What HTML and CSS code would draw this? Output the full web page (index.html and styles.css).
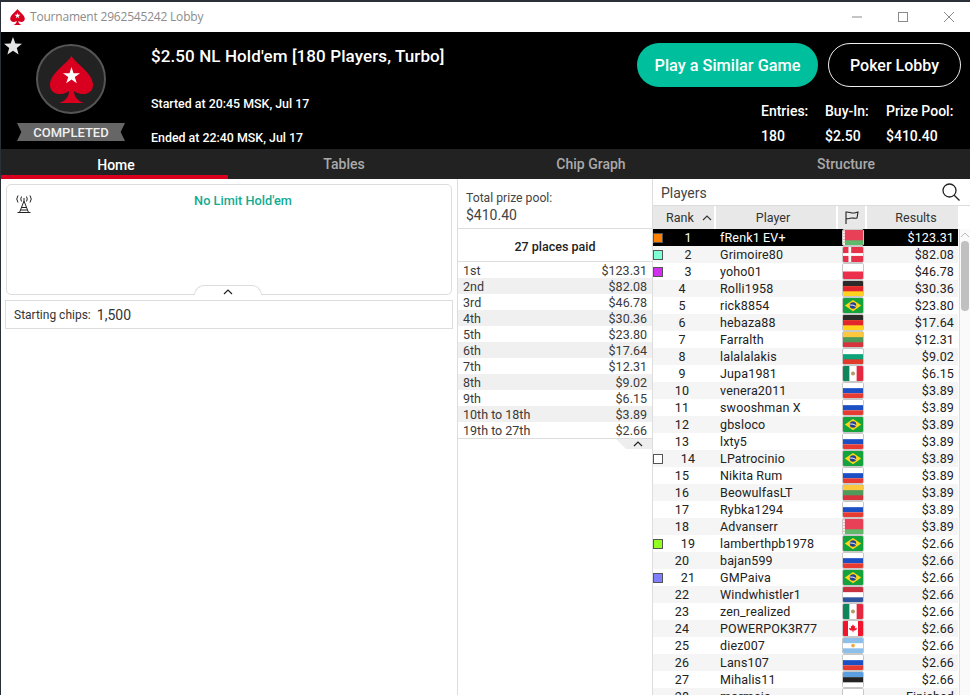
FILE: index.html
```html
<!DOCTYPE html>
<html lang="en">
<head>
<meta charset="utf-8">
<title>Tournament 2962545242 Lobby</title>
<link rel="stylesheet" href="styles.css">
</head>
<body>
<svg class="defs" width="0" height="0" aria-hidden="true">
  <defs>
    <symbol id="spade" viewBox="0 0 43 47"><path d="M21.5 0C17 8 0 17 0 29C0 38 11 41 19 35C19 41 15 45 9 47H34C28 45 24 41 24 35C32 41 43 38 43 29C43 17 26 8 21.500 0Z" fill="#d9001f"/><polygon points="21.5,11 23.52,17.22 30.06,17.22 24.77,21.06 26.79,27.28 21.5,23.44 16.21,27.28 18.23,21.06 12.94,17.22 19.48,17.22" fill="#fff"/></symbol>
    <symbol id="by" viewBox="0 0 22 16" preserveAspectRatio="none"><rect width="22" height="16" fill="#e84057"/><rect y="11" width="22" height="5" fill="#5fb96a"/><rect width="2" height="16" fill="#fff"/><path d="M.5 1h1M.5 4h1M.5 7h1M.5 10h1M.5 13h1" stroke="#e84057"/></symbol>
    <symbol id="dk" viewBox="0 0 22 16" preserveAspectRatio="none"><rect width="22" height="16" fill="#e8324a"/><rect x="6" width="3" height="16" fill="#fff"/><rect y="6.500" width="22" height="3" fill="#fff"/></symbol>
    <symbol id="pl" viewBox="0 0 22 16" preserveAspectRatio="none"><rect width="22" height="16" fill="#fff"/><rect y="8" width="22" height="8" fill="#ec2f4b"/></symbol>
    <symbol id="de" viewBox="0 0 22 16" preserveAspectRatio="none"><rect width="22" height="16" fill="#ffd21f"/><rect width="22" height="5.500" fill="#2a2a2a"/><rect y="5.500" width="22" height="5.500" fill="#e3262e"/></symbol>
    <symbol id="br" viewBox="0 0 22 16" preserveAspectRatio="none"><rect width="22" height="16" fill="#14a23c"/><path d="M11 2L20 8L11 14L2 8Z" fill="#ffd616"/><circle cx="11" cy="8" r="3.500" fill="#233f8f"/><path d="M7.800 7.500Q11 7 14.200 9" stroke="#fff" fill="none"/></symbol>
    <symbol id="lt" viewBox="0 0 22 16" preserveAspectRatio="none"><rect width="22" height="16" fill="#4d9a5a"/><rect width="22" height="5.500" fill="#fdc83d"/><rect y="11" width="22" height="5" fill="#d6333f"/></symbol>
    <symbol id="bg" viewBox="0 0 22 16" preserveAspectRatio="none"><rect width="22" height="16" fill="#0fa37a"/><rect width="22" height="5.500" fill="#fff"/><rect y="11" width="22" height="5" fill="#e23a2a"/></symbol>
    <symbol id="mx" viewBox="0 0 22 16" preserveAspectRatio="none"><rect width="22" height="16" fill="#fff"/><rect width="7" height="16" fill="#10855a"/><rect x="15" width="7" height="16" fill="#e4283f"/><circle cx="11" cy="8" r="2.200" fill="#b39a6a"/></symbol>
    <symbol id="ru" viewBox="0 0 22 16" preserveAspectRatio="none"><rect width="22" height="16" fill="#fff"/><rect y="5.500" width="22" height="5.500" fill="#1d4fc4"/><rect y="11" width="22" height="5" fill="#e63a32"/></symbol>
    <symbol id="nl" viewBox="0 0 22 16" preserveAspectRatio="none"><rect width="22" height="16" fill="#fff"/><rect width="22" height="5.500" fill="#c8313f"/><rect y="11" width="22" height="5" fill="#2f55a0"/></symbol>
    <symbol id="ca" viewBox="0 0 22 16" preserveAspectRatio="none"><rect width="22" height="16" fill="#fff"/><rect width="5.500" height="16" fill="#f0142c"/><rect x="16.500" width="5.500" height="16" fill="#f0142c"/><path d="M11 3.500l1.200 2 1.300-.5-.4 3 1.700-.8.600 1.200-2 1.700h-1.900v1.900h-1v-1.900H8.600l-2-1.700.6-1.200 1.700.8-.4-3 1.300.5z" fill="#f0142c"/></symbol>
    <symbol id="ar" viewBox="0 0 22 16" preserveAspectRatio="none"><rect width="22" height="16" fill="#fff"/><rect width="22" height="5.500" fill="#8cc0ea"/><rect y="11" width="22" height="5" fill="#8cc0ea"/><circle cx="11" cy="8" r="2" fill="#f3a93c"/></symbol>
    <symbol id="ee" viewBox="0 0 22 16" preserveAspectRatio="none"><rect width="22" height="16" fill="#fff"/><rect width="22" height="5.500" fill="#5b9fe0"/><rect y="5.500" width="22" height="5.500" fill="#222"/></symbol>
    <symbol id="blank" viewBox="0 0 22 16" preserveAspectRatio="none"><rect width="22" height="16" fill="#fff"/></symbol>
  </defs>
</svg>
<div class="window">
  <div class="titlebar">
    <svg class="title-logo"><use href="#spade"/></svg>
    <span class="title-text">Tournament 2962545242 Lobby</span>
    <div class="controls">
      <svg class="ctrl" viewBox="0 0 12 12"><path d="M1 6H11" /></svg>
      <svg class="ctrl" viewBox="0 0 12 12"><rect x="1.500" y="1.500" width="9" height="9"/></svg>
      <svg class="ctrl" viewBox="0 0 12 12"><path d="M1 1L11 11M11 1L1 11"/></svg>
    </div>
  </div>

  <header class="header">
    <svg class="fav" viewBox="0 0 18 18"><path d="M9 0l2.400 6.400 6.600.3-5.200 4.200 1.800 6.600L9 13.700l-5.600 3.800 1.800-6.600L0 6.700l6.600-.3z"/></svg>
    <div class="brand">
      <div class="badge"><svg class="badge-spade"><use href="#spade"/></svg></div>
      <div class="ribbon">COMPLETED</div>
    </div>
    <div class="details">
      <h1 class="game">$2.50 NL Hold'em [180 Players, Turbo]</h1>
      <p class="time started">Started at 20:45 MSK, Jul 17</p>
      <p class="time ended">Ended at 22:40 MSK, Jul 17</p>
    </div>
    <div class="actions">
      <div class="buttons">
        <button class="btn btn-primary">Play a Similar Game</button>
        <button class="btn btn-outline">Poker Lobby</button>
      </div>
      <div class="stats">
        <span>Entries:</span><span>Buy-In:</span><span>Prize Pool:</span>
        <span class="stat-val">180</span><span class="stat-val">$2.50</span><span class="stat-val">$410.40</span>
      </div>
    </div>
  </header>

  <nav class="tabs">
    <div class="tab active">Home</div>
    <div class="tab">Tables</div>
    <div class="tab">Chip Graph</div>
    <div class="tab">Structure</div>
  </nav>

  <main class="main">
    <section class="home">
      <div class="info">
        <div class="info-top">
          <svg class="antenna" viewBox="0 0 18 18"><path d="M9 6L4.500 17.500M9 6L13.500 17.500M6.800 12.500H11.200M5.600 15H12.400M2.500 17.500H15.500M9 3V6M6.500 1.500Q5 4 6.500 6.500M11.500 1.500Q13 4 11.500 6.500M3 .5Q.5 4 3 7.500M15 .5Q17.500 4 15 7.500"/></svg>
          <div class="variant">No Limit Hold'em</div>
        </div>
        <div class="collapse"><svg class="chev" viewBox="0 0 10 6"><path d="M1 5L5 1L9 5"/></svg></div>
      </div>
      <div class="chips"><span>Starting chips:</span><span class="chips-val">1,500</span></div>
    </section>

    <section class="prizes">
      <div class="pool">
        <div class="pool-label">Total prize pool:</div>
        <div class="pool-val">$410.40</div>
      </div>
      <div class="paid">27 places paid</div>
      <div class="pay"><span>1st</span><span>$123.31</span></div>
      <div class="pay"><span>2nd</span><span>$82.08</span></div>
      <div class="pay"><span>3rd</span><span>$46.78</span></div>
      <div class="pay"><span>4th</span><span>$30.36</span></div>
      <div class="pay"><span>5th</span><span>$23.80</span></div>
      <div class="pay"><span>6th</span><span>$17.64</span></div>
      <div class="pay"><span>7th</span><span>$12.31</span></div>
      <div class="pay"><span>8th</span><span>$9.02</span></div>
      <div class="pay"><span>9th</span><span>$6.15</span></div>
      <div class="pay"><span>10th to 18th</span><span>$3.89</span></div>
      <div class="pay"><span>19th to 27th</span><span>$2.66</span></div>
      <div class="pay-foot"><div class="pay-collapse"><svg class="chev" viewBox="0 0 10 6"><path d="M1 5L5 1L9 5"/></svg></div></div>
    </section>

    <section class="players">
      <div class="players-top">
        <span>Players</span>
        <svg class="search" viewBox="0 0 18 18"><circle cx="7.500" cy="7.500" r="6.500"/><path d="M12.200 12.200L17.500 17.500"/></svg>
      </div>
      <div class="thead">
        <div class="th th-rank"><span>Rank</span><svg class="sort" viewBox="0 0 10 6"><path d="M1 5L5 1L9 5"/></svg></div>
        <div class="th th-player">Player</div>
        <div class="th"><svg class="flag-head" viewBox="0 0 14 13"><path d="M1 13V1C4 .5 6 2.500 9 2S12 1 13 1L12 7C9 8 7 6 4 7.500L1 8"/></svg></div>
        <div class="th th-results">Results</div>
      </div>
      <div class="tbody-wrap">
        <div class="tbody">
          <div class="row selected"><div class="rank"><i class="mark m-orange"></i><span>1</span></div><div class="name">fRenk1 EV+</div><svg class="flag"><use href="#by"/></svg><div class="res">$123.31</div></div>
          <div class="row"><div class="rank"><i class="mark m-aqua"></i><span>2</span></div><div class="name">Grimoire80</div><svg class="flag"><use href="#dk"/></svg><div class="res">$82.08</div></div>
          <div class="row"><div class="rank"><i class="mark m-purple"></i><span>3</span></div><div class="name">yoho01</div><svg class="flag"><use href="#pl"/></svg><div class="res">$46.78</div></div>
          <div class="row"><div class="rank"><span>4</span></div><div class="name">Rolli1958</div><svg class="flag"><use href="#de"/></svg><div class="res">$30.36</div></div>
          <div class="row"><div class="rank"><span>5</span></div><div class="name">rick8854</div><svg class="flag"><use href="#br"/></svg><div class="res">$23.80</div></div>
          <div class="row"><div class="rank"><span>6</span></div><div class="name">hebaza88</div><svg class="flag"><use href="#de"/></svg><div class="res">$17.64</div></div>
          <div class="row"><div class="rank"><span>7</span></div><div class="name">Farralth</div><svg class="flag"><use href="#lt"/></svg><div class="res">$12.31</div></div>
          <div class="row"><div class="rank"><span>8</span></div><div class="name">lalalalakis</div><svg class="flag"><use href="#bg"/></svg><div class="res">$9.02</div></div>
          <div class="row"><div class="rank"><span>9</span></div><div class="name">Jupa1981</div><svg class="flag"><use href="#mx"/></svg><div class="res">$6.15</div></div>
          <div class="row"><div class="rank"><span>10</span></div><div class="name">venera2011</div><svg class="flag"><use href="#ru"/></svg><div class="res">$3.89</div></div>
          <div class="row"><div class="rank"><span>11</span></div><div class="name">swooshman X</div><svg class="flag"><use href="#ru"/></svg><div class="res">$3.89</div></div>
          <div class="row"><div class="rank"><span>12</span></div><div class="name">gbsloco</div><svg class="flag"><use href="#br"/></svg><div class="res">$3.89</div></div>
          <div class="row"><div class="rank"><span>13</span></div><div class="name">lxty5</div><svg class="flag"><use href="#ru"/></svg><div class="res">$3.89</div></div>
          <div class="row"><div class="rank"><i class="mark m-white"></i><span>14</span></div><div class="name">LPatrocinio</div><svg class="flag"><use href="#br"/></svg><div class="res">$3.89</div></div>
          <div class="row"><div class="rank"><span>15</span></div><div class="name">Nikita Rum</div><svg class="flag"><use href="#ru"/></svg><div class="res">$3.89</div></div>
          <div class="row"><div class="rank"><span>16</span></div><div class="name">BeowulfasLT</div><svg class="flag"><use href="#lt"/></svg><div class="res">$3.89</div></div>
          <div class="row"><div class="rank"><span>17</span></div><div class="name">Rybka1294</div><svg class="flag"><use href="#ru"/></svg><div class="res">$3.89</div></div>
          <div class="row"><div class="rank"><span>18</span></div><div class="name">Advanserr</div><svg class="flag"><use href="#by"/></svg><div class="res">$3.89</div></div>
          <div class="row"><div class="rank"><i class="mark m-green"></i><span>19</span></div><div class="name">lamberthpb1978</div><svg class="flag"><use href="#br"/></svg><div class="res">$2.66</div></div>
          <div class="row"><div class="rank"><span>20</span></div><div class="name">bajan599</div><svg class="flag"><use href="#ru"/></svg><div class="res">$2.66</div></div>
          <div class="row"><div class="rank"><i class="mark m-blue"></i><span>21</span></div><div class="name">GMPaiva</div><svg class="flag"><use href="#br"/></svg><div class="res">$2.66</div></div>
          <div class="row"><div class="rank"><span>22</span></div><div class="name">Windwhistler1</div><svg class="flag"><use href="#nl"/></svg><div class="res">$2.66</div></div>
          <div class="row"><div class="rank"><span>23</span></div><div class="name">zen_realized</div><svg class="flag"><use href="#mx"/></svg><div class="res">$2.66</div></div>
          <div class="row"><div class="rank"><span>24</span></div><div class="name">POWERPOK3R77</div><svg class="flag"><use href="#ca"/></svg><div class="res">$2.66</div></div>
          <div class="row"><div class="rank"><span>25</span></div><div class="name">diez007</div><svg class="flag"><use href="#ar"/></svg><div class="res">$2.66</div></div>
          <div class="row"><div class="rank"><span>26</span></div><div class="name">Lans107</div><svg class="flag"><use href="#ru"/></svg><div class="res">$2.66</div></div>
          <div class="row"><div class="rank"><span>27</span></div><div class="name">Mihalis11</div><svg class="flag"><use href="#ee"/></svg><div class="res">$2.66</div></div>
          <div class="row"><div class="rank"><span>28</span></div><div class="name">mormaic</div><svg class="flag"><use href="#blank"/></svg><div class="res">Finished</div></div>
        </div>
        <div class="scrollbar">
          <svg class="scroll-up" viewBox="0 0 10 6"><path d="M1 5L5 1L9 5"/></svg>
          <div class="thumb"></div>
        </div>
      </div>
    </section>
  </main>
</div>
</body>
</html>
```

FILE: styles.css
```css
* { box-sizing: border-box; }
html, body { margin: 0; height: 695px; overflow: hidden; }
body { background: #2b3038; font-family: Roboto, "Liberation Sans", sans-serif; color: #222; }
.defs { display: block; height: 0; }
.window { margin: 2px 0 0 1px; height: 693px; display: flex; flex-direction: column; background: #fff; overflow: hidden; }

.titlebar { flex: 0 0 30px; display: flex; align-items: center; background: #fff; padding: 0 0 1px 9px; }
.title-logo { width: 15px; height: 16px; }
.title-text { margin-left: 5px; padding-bottom: 1px; font: 12px "Open Sans", sans-serif; color: #8c8c8c; letter-spacing: -.2px; }
.controls { margin-left: auto; display: flex; gap: 34px; padding-right: 15px; }
.ctrl { width: 12px; height: 12px; fill: none; stroke: #8a8a8a; stroke-width: 1; }

.header { flex: 0 0 117px; min-height: 0; position: relative; display: flex; background: #000; color: #fff; }
.fav { position: absolute; left: 3px; top: 5px; width: 18px; height: 18px; fill: #e6e6e6; }
.brand { width: 140px; display: flex; flex-direction: column; align-items: center; padding-top: 12px; }
.badge { width: 70px; height: 70px; border-radius: 50%; border: 2px solid #555; background: #222; display: flex; align-items: center; justify-content: center; }
.badge-spade { width: 43px; height: 47px; margin-top: 1px; }
.ribbon { margin-top: 9px; width: 108px; height: 18px; background: #666; color: #f0f0f0; font-size: 13px; font-weight: 500; line-height: 20px; text-align: center; clip-path: polygon(0 0, 100% 0, 96% 50%, 100% 100%, 0 100%, 4% 50%); }
.details { margin-left: 10px; padding-top: 13px; }
.game { margin: 0; font-size: 17px; font-weight: 500; line-height: 22px; letter-spacing: .1px; }
.time { margin: 0; font-size: 12.4px; font-weight: 500; line-height: 16px; }
.started { margin-top: 29px; }
.ended { margin-top: 18px; }
.actions { margin-left: auto; padding: 11px 9px 0 0; display: flex; flex-direction: column; align-items: flex-end; }
.buttons { display: flex; gap: 10px; }
.btn { height: 44px; border-radius: 22px; font: 500 16px Roboto, sans-serif; color: #fff; background: none; padding: 0; }
.btn-primary { width: 181px; background: #00bf9d; border: 0; font-size: 16.3px; }
.btn-outline { width: 133px; border: 1px solid #eee; }
.stats { margin-top: 16px; display: grid; grid-template-columns: 64px 61px 75px; grid-template-rows: 25px 21px; font-size: 14px; font-weight: 500; line-height: 16px; }

.tabs { flex: 0 0 30px; display: grid; grid-template-columns: 227px 232px 262px 1fr; background: #222; color: #aaa; font-size: 14px; font-weight: 500; }
.tab { height: 30px; text-align: center; line-height: 30px; }
.tab.active { color: #fff; border-bottom: 4px solid #d9001f; line-height: 32px; padding-left: 3px; }

.main { flex: 1; min-height: 0; display: grid; grid-template-columns: 457px 194px 1fr; }
.home { border-right: 1px solid #ddd; padding: 5px 4px; }
.info { margin: 0 1px; height: 111px; border: 1px solid #ddd; border-radius: 5px; display: flex; flex-direction: column; }
.info-top { display: flex; padding: 10px 8px 0; flex: 1; }
.antenna { width: 18px; height: 18px; fill: none; stroke: #222; stroke-width: 1; }
.variant { flex: 1; text-align: center; padding-left: 10px; margin-top: -2px; color: #12ab91; font-size: 12.75px; font-weight: 500; line-height: 16px; }
.collapse { align-self: center; width: 68px; height: 10px; margin-left: -2px; background: #fff; border: 1px solid #ddd; border-bottom: 0; border-radius: 10px 10px 0 0 / 10px 10px 0 0; display: flex; justify-content: center; padding-top: 3px; margin-bottom: -1px; }
.chev { width: 10px; height: 6px; fill: none; stroke: #222; stroke-width: 1.200; }
.chips { margin-top: 5px; height: 29px; border: 1px solid #ddd; display: flex; align-items: center; padding-left: 8px; gap: 6px; font-size: 12px; color: #333; }
.chips-val { font-size: 14px; }

.prizes { color: #3a3a3a; }
.pool { height: 50px; padding: 11px 8px 0; border-bottom: 1px solid #ddd; }
.pool-label { font-size: 12.2px; line-height: 16px; color: #444; }
.pool-val { font-size: 14px; line-height: 18px; color: #444; }
.paid { height: 33px; line-height: 35px; text-align: center; font-size: 12.500px; font-weight: 500; color: #222; border-bottom: 1px solid #ddd; }
.pay { height: 16px; display: flex; justify-content: space-between; padding: 0 5px; font-size: 12.500px; line-height: 18px; }
.pay:nth-of-type(odd) { background: #fff; }
.pay:nth-of-type(even) { background: #f0f0f0; }
.pay-foot { border-top: 1px solid #ddd; display: flex; justify-content: flex-end; }
.pay-collapse { width: 36px; height: 10px; background: #eee; clip-path: polygon(0 0, 100% 0, 100% 100%, 28% 100%); display: flex; justify-content: center; padding: 2px 0 0 8px; }

.players { border-left: 1px solid #ddd; display: flex; flex-direction: column; min-width: 0; }
.players-top { flex: 0 0 27px; display: flex; align-items: center; justify-content: space-between; padding: 0 10px 0 8px; border-bottom: 1px solid #ddd; font-size: 14px; color: #444; }
.players-top span { padding-top: 1px; }
.search { width: 18px; height: 18px; fill: none; stroke: #222; stroke-width: 1.300; }
.thead { flex: 0 0 23px; display: grid; grid-template-columns: 63px 122px 29px 91px; background: #e8e8e8; width: 305px; font-size: 12.500px; color: #333; }
.th { display: flex; align-items: center; justify-content: center; border-right: 2px solid #fff; }
.th:last-child { border-right: 0; }
.th-rank { justify-content: flex-start; padding-left: 13px; gap: 8px; }
.th-player { padding-right: 6px; }
.th-results { padding-left: 7px; }
.sort { width: 10px; height: 6px; fill: none; stroke: #333; stroke-width: 1.100; }
.flag-head { width: 14px; height: 13px; fill: none; stroke: #222; stroke-width: 1.100; }
.tbody-wrap { flex: 1; min-height: 0; display: flex; }
.tbody { width: 305px; }
.row { height: 17px; display: grid; grid-template-columns: 63px 122px 29px 91px; align-items: center; font-size: 12.500px; line-height: 17px; color: #222; letter-spacing: .15px; }
.row:nth-child(even) { background: #f5f5f5; }
.row.selected { background: #000; color: #fff; }
.rank { display: flex; align-items: center; padding-right: 5px; }
.rank span { flex: 1; text-align: center; }
.mark { width: 10px; height: 10px; margin-right: 2px; border: 1px solid #555; }
.m-orange { background: #ff8000; }
.m-aqua { background: #7fffd4; }
.m-purple { background: #d02ff0; }
.m-white { background: #fff; }
.m-green { background: #90ff20; }
.m-blue { background: #8080ff; }
.name { padding-left: 4px; white-space: nowrap; }
.flag { width: 22px; height: 17px; margin-left: 4px; border-radius: 2px; border: 1px solid #c8c8c8; }
.res { text-align: right; padding-right: 4px; }
.scrollbar { flex: 1; margin-left: 1px; border-left: 1px solid #ddd; display: flex; flex-direction: column; align-items: center; padding-top: 3px; background: #fafafa; }
.scroll-up { width: 10px; height: 6px; fill: none; stroke: #bbb; stroke-width: 1; }
.thumb { margin-top: 3px; width: 8px; height: 70px; background: #c0c0c0; border-radius: 4px; }
```
